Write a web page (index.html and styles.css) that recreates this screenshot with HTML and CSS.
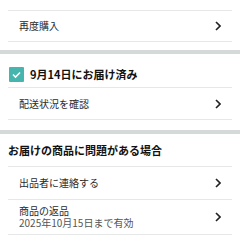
FILE: index.html
```html
<!DOCTYPE html>
<html lang="ja">
<head>
<meta charset="utf-8">
<link rel="stylesheet" href="styles.css">
</head>
<body>
<div class="section first">
  <div class="row bordered-top">
    <span class="label">再度購入</span>
    <svg class="chev" width="6" height="10" viewBox="0 0 6 10"><polyline points="1,1 5,5 1,9" fill="none" stroke="#222" stroke-width="1.6"/></svg>
  </div>
</div>
<div class="bar"></div>
<div class="section second">
  <div class="heading check-heading">
    <span class="checkbox"><svg width="15" height="15" viewBox="0 0 15 15"><polyline points="4,7.5 6.5,10 11,5.5" fill="none" stroke="#fff" stroke-width="1.6"/></svg></span>
    <span class="htext">9月14日にお届け済み</span>
  </div>
  <div class="row bordered-top">
    <span class="label">配送状況を確認</span>
    <svg class="chev" width="6" height="10" viewBox="0 0 6 10"><polyline points="1,1 5,5 1,9" fill="none" stroke="#222" stroke-width="1.6"/></svg>
  </div>
</div>
<div class="bar"></div>
<div class="section third">
  <div class="heading plain-heading">
    <span class="htext">お届けの商品に問題がある場合</span>
  </div>
  <div class="row bordered-top tall">
    <span class="label">出品者に連絡する</span>
    <svg class="chev" width="6" height="10" viewBox="0 0 6 10"><polyline points="1,1 5,5 1,9" fill="none" stroke="#222" stroke-width="1.6"/></svg>
  </div>
  <div class="row two-line">
    <div class="stack">
      <span class="label">商品の返品</span>
      <span class="sub">2025年10月15日まで有効</span>
    </div>
    <svg class="chev" width="6" height="10" viewBox="0 0 6 10"><polyline points="1,1 5,5 1,9" fill="none" stroke="#222" stroke-width="1.6"/></svg>
  </div>
</div>
</body>
</html>
```
FILE: styles.css
```css
html, body {
  margin: 0;
  padding: 0;
  background: #fff;
}
body {
  width: 240px;
  font-family: "Noto Sans CJK JP", "Noto Sans", sans-serif;
  color: #2b2b2b;
}
.section {
  padding: 0 8px;
}
.first {
  padding-top: 10px;
  padding-bottom: 8px;
}
.second {
  padding-bottom: 10px;
}
.bar {
  height: 4px;
  background: #d5d9d9;
}
.row {
  display: flex;
  align-items: center;
  justify-content: space-between;
  height: 30px;
  padding: 0 11px;
  border-bottom: 1px solid #e6e8e8;
}
.bordered-top {
  border-top: 1px solid #e6e8e8;
}
.second .row {
  height: 31px;
}
.row.tall {
  height: 32px;
}
.row.two-line {
  height: auto;
  padding-top: 5px;
  padding-bottom: 5px;
}
.label {
  font-size: 10px;
  line-height: 12px;
  color: #2b2b2b;
}
.stack {
  display: flex;
  flex-direction: column;
}
.sub {
  font-size: 10px;
  line-height: 12px;
  color: #555;
}
.chev {
  display: block;
  flex: none;
}
.heading {
  display: flex;
  align-items: center;
}
.check-heading {
  height: 20px;
  padding: 10px 0 3px 1px;
  gap: 6px;
}
.plain-heading {
  height: 32px;
}
.checkbox {
  width: 15px;
  height: 15px;
  background: #46b5ad;
  border-radius: 1px;
  display: block;
}
.checkbox svg {
  display: block;
}
.htext {
  font-size: 11px;
  font-weight: bold;
  color: #111;
  line-height: 14px;
}
```
